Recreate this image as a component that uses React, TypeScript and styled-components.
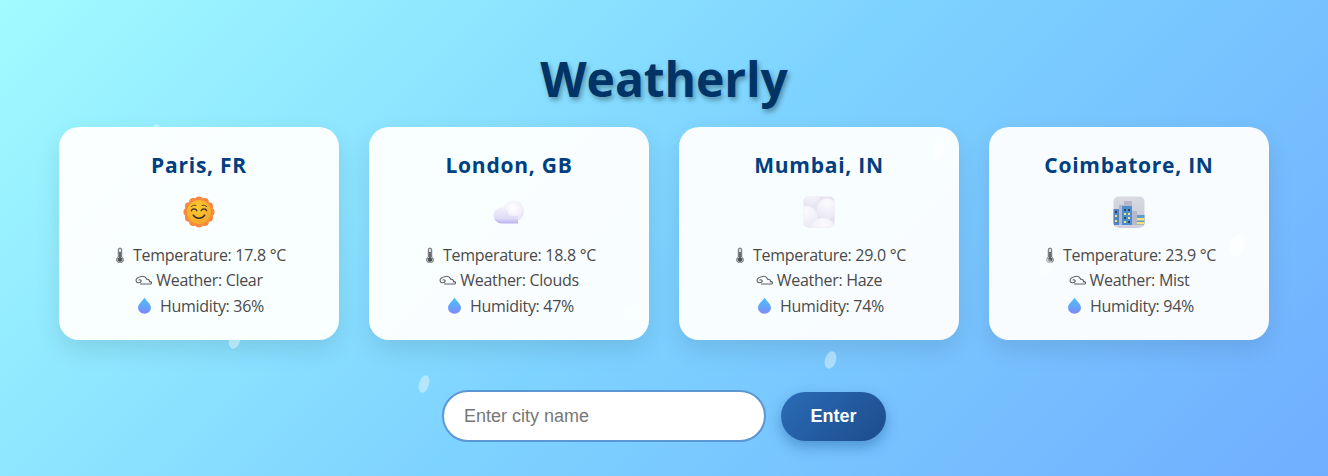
import styled, { createGlobalStyle } from "styled-components";

interface Report {
  city: string;
  temp: string;
  weather: string;
  humidity: string;
  icon: "clear" | "clouds" | "haze" | "mist";
}

const reports: Array<Report> = [
  { city: "Paris, FR", temp: "17.8", weather: "Clear", humidity: "36", icon: "clear" },
  { city: "London, GB", temp: "18.8", weather: "Clouds", humidity: "47", icon: "clouds" },
  { city: "Mumbai, IN", temp: "29.0", weather: "Haze", humidity: "74", icon: "haze" },
  { city: "Coimbatore, IN", temp: "23.9", weather: "Mist", humidity: "94", icon: "mist" },
];

// x, y, width, height, opacity
const drops = [
  [150, 124, 10, 17, 0.4],
  [229, 332, 11, 17, 0.4],
  [419, 375, 10, 18, 0.4],
  [825, 351, 11, 18, 0.4],
  [933, 142, 11, 18, 0.55],
  [1230, 233, 15, 24, 0.5],
  [325, 180, 11, 14, 0.35],
  [624, 306, 10, 16, 0.35],
  [1040, 258, 12, 18, 0.4],
];

const petals = Array.from({ length: 12 }, (_, index) => (index * Math.PI) / 6);

const SunFace = () => (
  <svg width="32" height="32" viewBox="0 0 32 32">
    <defs>
      <radialGradient id="sunFace" cx="0.45" cy="0.35" r="0.7">
        <stop offset="0" stopColor="#fccb30" />
        <stop offset="1" stopColor="#f5a52a" />
      </radialGradient>
    </defs>
    {petals.map((angle) => (
      <circle
        key={angle}
        cx={16 + 11.6 * Math.cos(angle)}
        cy={16 + 11.6 * Math.sin(angle)}
        r="4"
        fill="#f58a3c"
      />
    ))}
    <circle cx="16" cy="16" r="12" fill="url(#sunFace)" />
    <g fill="none" stroke="#3b2b2b" strokeWidth="1.200" strokeLinecap="round">
      <path d="M8.300 14.800c1-2.600 4.600-2.600 5.600 0" />
      <path d="M18.100 14.800c1-2.600 4.600-2.600 5.600 0" />
      <path d="M10.300 19.200c2.500 4 8.900 4 11.400 0" strokeWidth="1.500" />
      <path d="M8.300 10.600c1.200-1.200 3-1.700 4.700-1.200M19 9.400c1.700-.5 3.500 0 4.700 1.200" strokeWidth="0.800" />
    </g>
  </svg>
);

const CloudPuff = () => (
  <svg width="32" height="32" viewBox="0 0 32 32">
    <defs>
      <radialGradient id="puffBig" cx="0.45" cy="0.35" r="0.7">
        <stop offset="0" stopColor="#ffffff" />
        <stop offset="0.7" stopColor="#f0edf9" />
        <stop offset="1" stopColor="#dcd8f4" />
      </radialGradient>
      <linearGradient id="puffSmall" x1="0" y1="0" x2="0" y2="1">
        <stop offset="0" stopColor="#f2f0fb" />
        <stop offset="0.7" stopColor="#dedaf5" />
        <stop offset="1" stopColor="#b9b0ef" />
      </linearGradient>
    </defs>
    <circle cx="20.500" cy="15" r="10.500" fill="url(#puffBig)" />
    <path d="M8.500 27.500a8 8 0 0 1 0-16c4.500 0 7.500 3.500 7.500 8l9 .5v7.500z" fill="url(#puffSmall)" />
    <path d="M16 18c-.2-2.500-1.500-5-3.500-6.100" fill="none" stroke="#f9f8fe" strokeWidth="1" />
  </svg>
);

const HazeTile = () => (
  <svg width="32" height="32" viewBox="0 0 32 32">
    <defs>
      <linearGradient id="hazeBack" x1="0" y1="0" x2="1" y2="1">
        <stop offset="0" stopColor="#e9e8f0" />
        <stop offset="1" stopColor="#e2dfef" />
      </linearGradient>
      <radialGradient id="hazePuff" cx="0.5" cy="0.2" r="0.85">
        <stop offset="0" stopColor="#fbfbfe" />
        <stop offset="1" stopColor="#e8e6f3" />
      </radialGradient>
      <clipPath id="hazeClip">
        <rect x="0.500" y="0.500" width="31" height="31" rx="5" />
      </clipPath>
    </defs>
    <g clipPath="url(#hazeClip)">
      <rect width="32" height="32" fill="url(#hazeBack)" />
      <circle cx="8" cy="1" r="9" fill="url(#hazePuff)" />
      <circle cx="24" cy="13" r="10.500" fill="url(#hazePuff)" />
      <circle cx="3" cy="22" r="12" fill="url(#hazePuff)" />
      <circle cx="20" cy="35" r="13" fill="url(#hazePuff)" />
    </g>
  </svg>
);

const CityTile = () => (
  <svg width="32" height="32" viewBox="0 0 32 32">
    <defs>
      <linearGradient id="citySky" x1="0" y1="0" x2="0" y2="1">
        <stop offset="0" stopColor="#dadae2" />
        <stop offset="1" stopColor="#c6c6d8" />
      </linearGradient>
      <clipPath id="cityClip">
        <rect x="0.500" y="0.500" width="31" height="31" rx="5" />
      </clipPath>
    </defs>
    <g clipPath="url(#cityClip)">
      <rect width="32" height="32" fill="url(#citySky)" />
      <path d="M6 32V9h5V5h8v10h5v17z" fill="#b7b7cb" />
      <rect x="0" y="13" width="6" height="17" fill="#4f86c0" />
      <rect x="9" y="10" width="10" height="20" fill="#4b8fcf" />
      <rect x="24" y="19" width="8" height="11" fill="#5d9ad0" />
      <rect y="29" width="32" height="3" fill="#cfcfe0" />
      <g fill="#f6e27a">
        <rect x="2" y="19" width="2" height="2" />
        <rect x="2" y="24" width="2" height="2" />
        <rect x="11" y="17" width="2" height="2" />
        <rect x="15" y="17" width="2" height="2" />
        <rect x="15" y="21" width="2" height="2" />
        <rect x="11" y="25" width="2" height="2" />
        <rect x="24" y="22" width="8" height="2.500" />
        <rect x="24" y="26" width="8" height="2.500" />
      </g>
      <g fill="#333f5c">
        <rect x="2" y="15" width="2" height="2" />
        <rect x="11" y="13" width="2" height="2" />
        <rect x="15" y="13" width="2" height="2" />
        <rect x="11" y="21" width="2" height="2" />
        <rect x="15" y="25" width="2" height="2" />
      </g>
    </g>
  </svg>
);

const ThermometerIcon = () => (
  <svg width="16" height="16" viewBox="0 0 16 16">
    <path
      d="M6.300 2.800a1.700 1.700 0 0 1 3.400 0v7.200a3.300 3.300 0 1 1-3.400 0z"
      fill="#dcdce0"
      stroke="#55585c"
      strokeWidth="0.900"
    />
    <path d="M7.200 5h1.600v5.600a2.200 2.200 0 1 1-1.600 0z" fill="#4e5155" />
  </svg>
);

const FogIcon = () => (
  <svg width="17" height="12" viewBox="0 0 17 12">
    <path
      d="M5.500 10H15c1.200 0 1.700-.7 1.500-1.400-.2-.8-1-1.100-2-.9.200-1.600-1.200-2.800-2.800-2.400C11 3.400 9 1.800 7.300 2.300 5.600 2.700 3 3 1.700 4.700.6 6 1 8.400 3 8.700c1.700.2 3-.3 3.200-1.500.2-1-1-1.900-2.200-1.300"
      fill="none"
      stroke="#5c6066"
      strokeWidth="1.100"
      strokeLinecap="round"
    />
  </svg>
);

const DropletIcon = () => (
  <svg width="21" height="17" viewBox="0 0 21 17">
    <defs>
      <linearGradient id="droplet" x1="0" y1="0" x2="0" y2="1">
        <stop offset="0" stopColor="#4cc0f7" />
        <stop offset="0.55" stopColor="#62a6f8" />
        <stop offset="1" stopColor="#8485f8" />
      </linearGradient>
    </defs>
    <path d="M10.500.5c1.700 3.200 6.500 6.700 6.500 10.300a6.500 6 0 0 1-13 0C4 7.200 8.800 3.700 10.500.5z" fill="url(#droplet)" />
  </svg>
);

const weatherIcons = {
  clear: <SunFace />,
  clouds: <CloudPuff />,
  haze: <HazeTile />,
  mist: <CityTile />,
};

export default function App() {
  return (
    <Page>
      <GlobalStyle />
      <Title>Weatherly</Title>
      <CardRow>
        {reports.map((report) => (
          <Card key={report.city}>
            <City>{report.city}</City>
            <IconSlot>{weatherIcons[report.icon]}</IconSlot>
            <Line>
              <ThermometerIcon />
              <LineText $gap={5}>Temperature: {report.temp} °C</LineText>
            </Line>
            <Line>
              <FogIcon />
              <LineText $gap={4}>Weather: {report.weather}</LineText>
            </Line>
            <Line>
              <DropletIcon />
              <LineText $gap={5}>Humidity: {report.humidity}%</LineText>
            </Line>
          </Card>
        ))}
      </CardRow>
      <SearchForm onSubmit={(event) => event.preventDefault()}>
        <CityInput type="text" placeholder="Enter city name" />
        <EnterButton type="submit">Enter</EnterButton>
      </SearchForm>
      {drops.map(([x, y, width, height, alpha], index) => (
        <Drop key={index} $x={x} $y={y} $width={width} $height={height} $alpha={alpha} />
      ))}
    </Page>
  );
}

const GlobalStyle = createGlobalStyle`
  html, body {
    margin: 0;
    padding: 0;
  }
`;

const Page = styled.div`
  position: relative;
  width: 1328px;
  height: 476px;
  overflow: hidden;
  display: flex;
  flex-direction: column;
  align-items: center;
  padding-top: 46px;
  box-sizing: border-box;
  background: linear-gradient(135deg, #a1fbff 0%, #7dd3ff 50%, #70aeff 100%);
  font-family: "Open Sans", "Noto Sans", sans-serif;
`;

const Drop = styled.span<{
  $x: number;
  $y: number;
  $width: number;
  $height: number;
  $alpha: number;
}>`
  position: absolute;
  left: ${(props) => props.$x}px;
  top: ${(props) => props.$y}px;
  width: ${(props) => props.$width}px;
  height: ${(props) => props.$height}px;
  border-radius: 50%;
  background: rgba(255, 255, 255, ${(props) => props.$alpha});
  transform: rotate(18deg);
  pointer-events: none;
`;

const Title = styled.h1`
  margin: 0;
  font-size: 48px;
  line-height: 65px;
  font-weight: 700;
  letter-spacing: -0.1px;
  color: #003366;
  text-shadow: 2px 3px 5px rgba(0, 0, 0, 0.35);
`;

const CardRow = styled.div`
  display: flex;
  gap: 30px;
  margin-top: 16px;
`;

const Card = styled.div`
  width: 280px;
  height: 213px;
  box-sizing: border-box;
  padding-top: 22px;
  display: flex;
  flex-direction: column;
  align-items: center;
  border-radius: 20px;
  background: rgba(255, 255, 255, 0.95);
  box-shadow: 0 10px 25px rgba(0, 0, 0, 0.1);
`;

const City = styled.h2`
  margin: 0;
  font-size: 21px;
  line-height: 32px;
  font-weight: 700;
  letter-spacing: 0.75px;
  color: #004080;
`;

const IconSlot = styled.div`
  width: 32px;
  height: 32px;
  margin-top: 15px;
  margin-bottom: 14px;
`;

const Line = styled.div`
  display: flex;
  align-items: center;
  height: 25.5px;
  font-size: 16px;
  letter-spacing: -0.3px;
  color: #4a4a4a;
`;

const LineText = styled.span<{ $gap: number }>`
  margin-left: ${(props) => props.$gap}px;
`;

const SearchForm = styled.form`
  display: flex;
  align-items: center;
  gap: 15px;
  margin-top: 50px;
`;

const CityInput = styled.input`
  width: 324px;
  height: 52px;
  box-sizing: border-box;
  padding: 0 20px;
  border: 2px solid #5b97d5;
  border-radius: 30px;
  outline: none;
  background: #ffffff;
  font-family: "Liberation Sans", sans-serif;
  font-size: 18px;
  color: #222222;
  &::placeholder {
    color: #777777;
  }
`;

const EnterButton = styled.button`
  width: 105px;
  height: 49px;
  border: none;
  border-radius: 30px;
  background: linear-gradient(135deg, #2b6cb6, #1c4c8c);
  box-shadow: 0 6px 14px rgba(0, 64, 128, 0.35);
  font-family: "Liberation Sans", sans-serif;
  font-size: 18px;
  font-weight: 700;
  color: #ffffff;
  cursor: pointer;
`;
